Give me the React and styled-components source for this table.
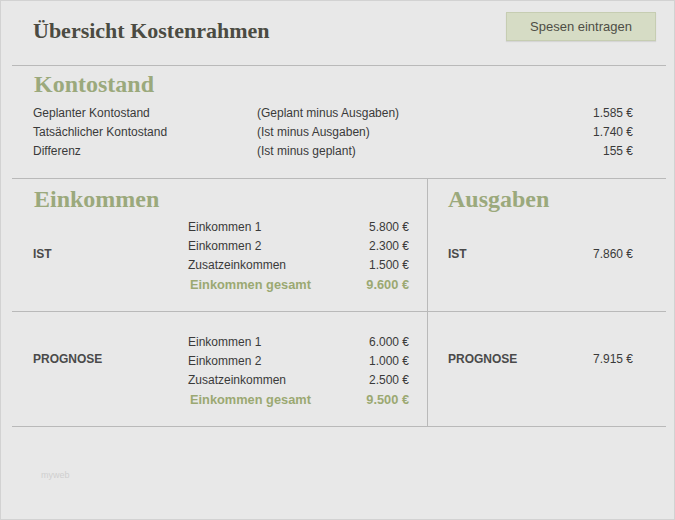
import React from "react";
import styled, { createGlobalStyle } from "styled-components";

const GlobalStyle = createGlobalStyle`
  html, body {
    margin: 0;
    padding: 0;
    background: #e8e8e8;
  }
  * {
    box-sizing: border-box;
  }
`;

const kontostand = [
  { label: "Geplanter Kontostand", note: "(Geplant minus Ausgaben)", amount: "1.585 €" },
  { label: "Tatsächlicher Kontostand", note: "(Ist minus Ausgaben)", amount: "1.740 €" },
  { label: "Differenz", note: "(Ist minus geplant)", amount: "155 €" },
];

const einkommen = {
  ist: {
    items: [
      ["Einkommen 1", "5.800 €"],
      ["Einkommen 2", "2.300 €"],
      ["Zusatzeinkommen", "1.500 €"],
    ],
    total: "9.600 €",
  },
  prognose: {
    items: [
      ["Einkommen 1", "6.000 €"],
      ["Einkommen 2", "1.000 €"],
      ["Zusatzeinkommen", "2.500 €"],
    ],
    total: "9.500 €",
  },
};

const Page = styled.div`
  width: 675px;
  height: 520px;
  background: #e8e8e8;
  border: 1px solid #d2d2d2;
  padding: 0 8px 0 11px;
  font-family: "Liberation Sans", Arial, sans-serif;
  color: #3a3a3a;
  display: flex;
  flex-direction: column;
`;

const Header = styled.header`
  height: 65px;
  display: flex;
  justify-content: space-between;
  align-items: flex-start;
  padding: 11px 10px 0 21px;
  border-bottom: 1px solid #b9b9b9;
`;

const Title = styled.h1`
  margin: 8px 0 0;
  font-family: "Liberation Serif", "Times New Roman", serif;
  font-weight: bold;
  font-size: 22px;
  line-height: 22px;
  color: #4b4b42;
`;

const Button = styled.button`
  width: 150px;
  height: 29px;
  background: #d6dcc5;
  border: 1px solid #c6cdb2;
  box-shadow: 0 1px 1px rgba(0, 0, 0, 0.08);
  font-family: "Liberation Sans", Arial, sans-serif;
  font-size: 13px;
  color: #4e4e46;
  padding: 0;
`;

const Heading = styled.h2`
  margin: 0;
  font-family: "Liberation Serif", "Times New Roman", serif;
  font-weight: bold;
  font-size: 24px;
  line-height: 26px;
  color: #9ba97c;
`;

const Kontostand = styled.section`
  padding: 5px 33px 17px 21px;
  border-bottom: 1px solid #b9b9b9;

  ${Heading} {
    margin-left: 1px;
    margin-bottom: 7px;
  }
`;

const BalanceRow = styled.div`
  display: grid;
  grid-template-columns: 224px 1fr auto;
  font-size: 12px;
  line-height: 19px;
`;

const Amount = styled.span`
  text-align: right;
  white-space: nowrap;
`;

const Board = styled.section`
  display: grid;
  grid-template-columns: 415px 1fr;
`;

const Cell = styled.div`
  border-bottom: 1px solid #b9b9b9;
  border-left: ${({ $divider }) => ($divider ? "1px solid #b9b9b9" : "none")};
  padding: ${({ $top }) => $top}px ${({ $right }) => $right}px ${({ $bottom }) => $bottom}px ${({ $left }) => $left}px;

  ${Heading} {
    margin-left: ${({ $divider }) => ($divider ? 0 : 1)}px;
    margin-bottom: 6px;
  }
`;

const Body = styled.div`
  display: flex;
  align-items: flex-start;
`;

const RowLabel = styled.div`
  width: ${({ $width }) => $width || "auto"};
  flex: ${({ $grow }) => ($grow ? 1 : "none")};
  margin-top: ${({ $offset }) => $offset}px;
  font-size: 12px;
  font-weight: bold;
  line-height: 19px;
  color: #4a4a4a;
`;

const Items = styled.div`
  width: 221px;
`;

const ItemRow = styled.div`
  display: flex;
  justify-content: space-between;
  font-size: 12px;
  line-height: 19px;
`;

const TotalRow = styled(ItemRow)`
  padding-left: 2px;
  font-size: 12.8px;
  font-weight: bold;
  color: #9ba872;
`;

const Value = styled.div`
  margin-top: ${({ $offset }) => $offset}px;
  font-size: 12px;
  line-height: 19px;
`;

const Footer = styled.div`
  padding: 43px 0 0 29px;
  font-size: 9px;
  color: #cfcfcf;
`;

const IncomeBlock = ({ label, offset, data }) => (
  <Body>
    <RowLabel $width="155px" $offset={offset}>
      {label}
    </RowLabel>
    <Items>
      {data.items.map(([name, value]) => (
        <ItemRow key={name}>
          <span>{name}</span>
          <Amount>{value}</Amount>
        </ItemRow>
      ))}
      <TotalRow>
        <span>Einkommen gesamt</span>
        <Amount>{data.total}</Amount>
      </TotalRow>
    </Items>
  </Body>
);

const ExpenseLine = ({ label, offset, value }) => (
  <Body>
    <RowLabel $grow $offset={offset}>
      {label}
    </RowLabel>
    <Value $offset={offset}>{value}</Value>
  </Body>
);

export default function App() {
  return (
    <>
      <GlobalStyle />
      <Page>
        <Header>
          <Title>Übersicht Kostenrahmen</Title>
          <Button>Spesen eintragen</Button>
        </Header>

        <Kontostand>
          <Heading>Kontostand</Heading>
          {kontostand.map((row) => (
            <BalanceRow key={row.label}>
              <span>{row.label}</span>
              <span>{row.note}</span>
              <Amount>{row.amount}</Amount>
            </BalanceRow>
          ))}
        </Kontostand>

        <Board>
          <Cell $top={7} $right={6} $bottom={17} $left={21}>
            <Heading>Einkommen</Heading>
            <IncomeBlock label="IST" offset={27} data={einkommen.ist} />
          </Cell>
          <Cell $divider $top={7} $right={33} $bottom={17} $left={20}>
            <Heading>Ausgaben</Heading>
            <ExpenseLine label="IST" offset={27} value="7.860 €" />
          </Cell>
          <Cell $top={21} $right={6} $bottom={17} $left={21}>
            <IncomeBlock label="PROGNOSE" offset={17} data={einkommen.prognose} />
          </Cell>
          <Cell $divider $top={21} $right={33} $bottom={17} $left={20}>
            <ExpenseLine label="PROGNOSE" offset={17} value="7.915 €" />
          </Cell>
        </Board>

        <Footer>myweb</Footer>
      </Page>
    </>
  );
}
